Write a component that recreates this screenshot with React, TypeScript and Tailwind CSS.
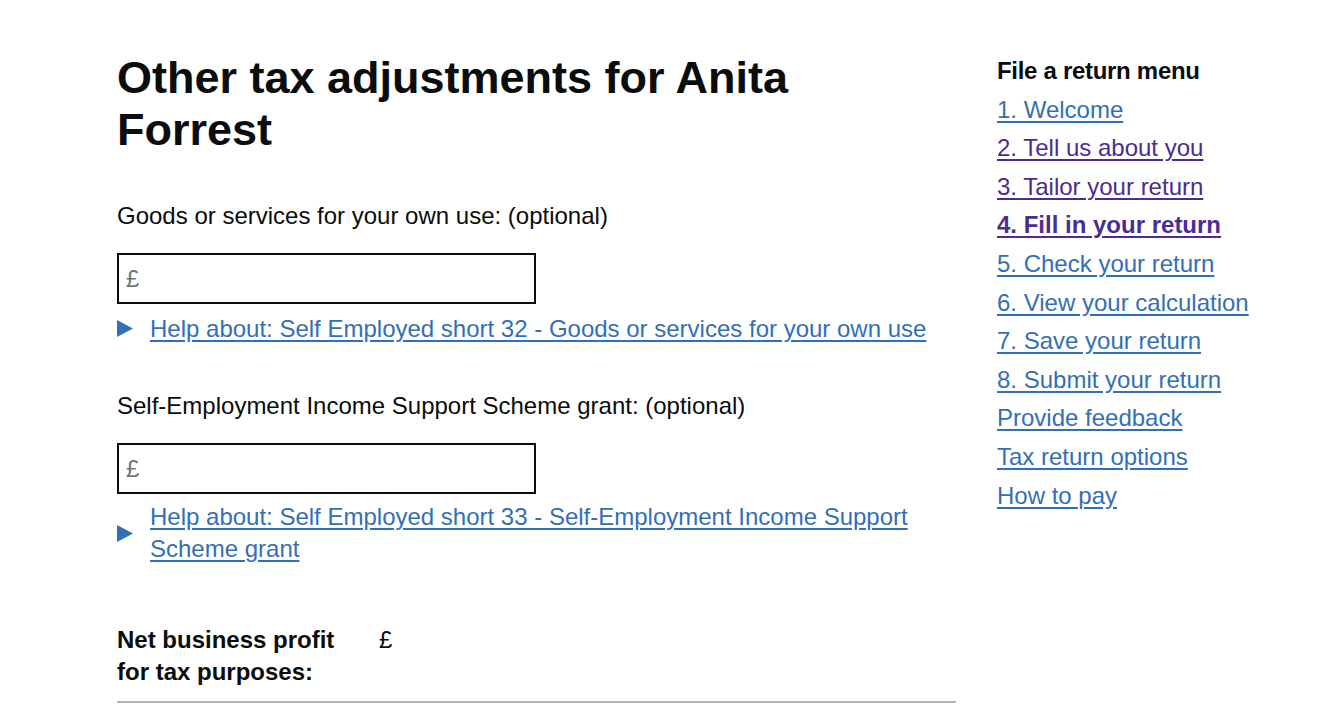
import React from 'react';

const font = { fontFamily: '"Liberation Sans", Arial, sans-serif' };

const menu = [
  { label: '1. Welcome', visited: false, current: false },
  { label: '2. Tell us about you', visited: true, current: false },
  { label: '3. Tailor your return', visited: true, current: false },
  { label: '4. Fill in your return', visited: true, current: true },
  { label: '5. Check your return', visited: false, current: false },
  { label: '6. View your calculation', visited: false, current: false },
  { label: '7. Save your return', visited: false, current: false },
  { label: '8. Submit your return', visited: false, current: false },
  { label: 'Provide feedback', visited: false, current: false },
  { label: 'Tax return options', visited: false, current: false },
  { label: 'How to pay', visited: false, current: false },
];

function Arrow() {
  return (
    <svg width="16" height="17" viewBox="0 0 16 17" className="shrink-0">
      <polygon points="0,0 16,8.5 0,17" fill="#336fb7" />
    </svg>
  );
}

function MoneyInput() {
  return (
    <div className="w-[419px] h-[51px] border-2 border-[#0b0c0c] flex items-center px-[7px]">
      <span className="text-[#6f777b] text-[24px]">£</span>
    </div>
  );
}

export default function App() {
  return (
    <div className="min-h-screen bg-white text-[#0b0c0c]" style={font}>
      <div className="flex pl-[117px] pt-[52px]">
        {/* Main form column */}
        <main className="w-[839px]">
          <h1 className="text-[45px] leading-[52px] font-bold">
            Other tax adjustments for Anita
            <br />
            Forrest
          </h1>

          <p className="mt-[44px] text-[24px] leading-[31px]">Goods or services for your own use: (optional)</p>
          <div className="mt-[22px]">
            <MoneyInput />
          </div>
          <div className="mt-[9px] flex items-center gap-[17px]">
            <Arrow />
            <a href="#" className="text-[24px] leading-[31px] text-[#336fb7] underline underline-offset-[3px]">
              Help about: Self Employed short 32 - Goods or services for your own use
            </a>
          </div>

          <p className="mt-[46px] text-[24px] leading-[31px]">Self-Employment Income Support Scheme grant: (optional)</p>
          <div className="mt-[22px]">
            <MoneyInput />
          </div>
          <div className="mt-[7px] flex items-center gap-[17px]">
            <Arrow />
            <a href="#" className="text-[24px] leading-[32px] text-[#336fb7] underline underline-offset-[3px]">
              Help about: Self Employed short 33 - Self-Employment Income Support
              <br />
              Scheme grant
            </a>
          </div>

          <div className="mt-[59px] flex">
            <div className="w-[262px] text-[24px] leading-[32px] font-bold">
              Net business profit
              <br />
              for tax purposes:
            </div>
            <div className="text-[24px] leading-[32px]">£</div>
          </div>
          <hr className="mt-[13px] border-0 border-t-2 border-[#b1b4b6]" />
        </main>

        {/* Side menu */}
        <nav className="ml-[41px] pt-[3px]">
          <h2 className="text-[24px] leading-[31px] font-bold tracking-[-0.3px]">File a return menu</h2>
          <ul className="mt-[7.6px] flex flex-col gap-[7.6px]">
            {menu.map(item => (
              <li key={item.label}>
                <a
                  href="#"
                  className={
                    'text-[24px] leading-[31px] underline underline-offset-[3px] ' +
                    (item.visited ? 'text-[#4c2c92]' : 'text-[#336fb7]') +
                    (item.current ? ' font-bold' : '')
                  }
                >
                  {item.label}
                </a>
              </li>
            ))}
          </ul>
        </nav>
      </div>
    </div>
  );
}
